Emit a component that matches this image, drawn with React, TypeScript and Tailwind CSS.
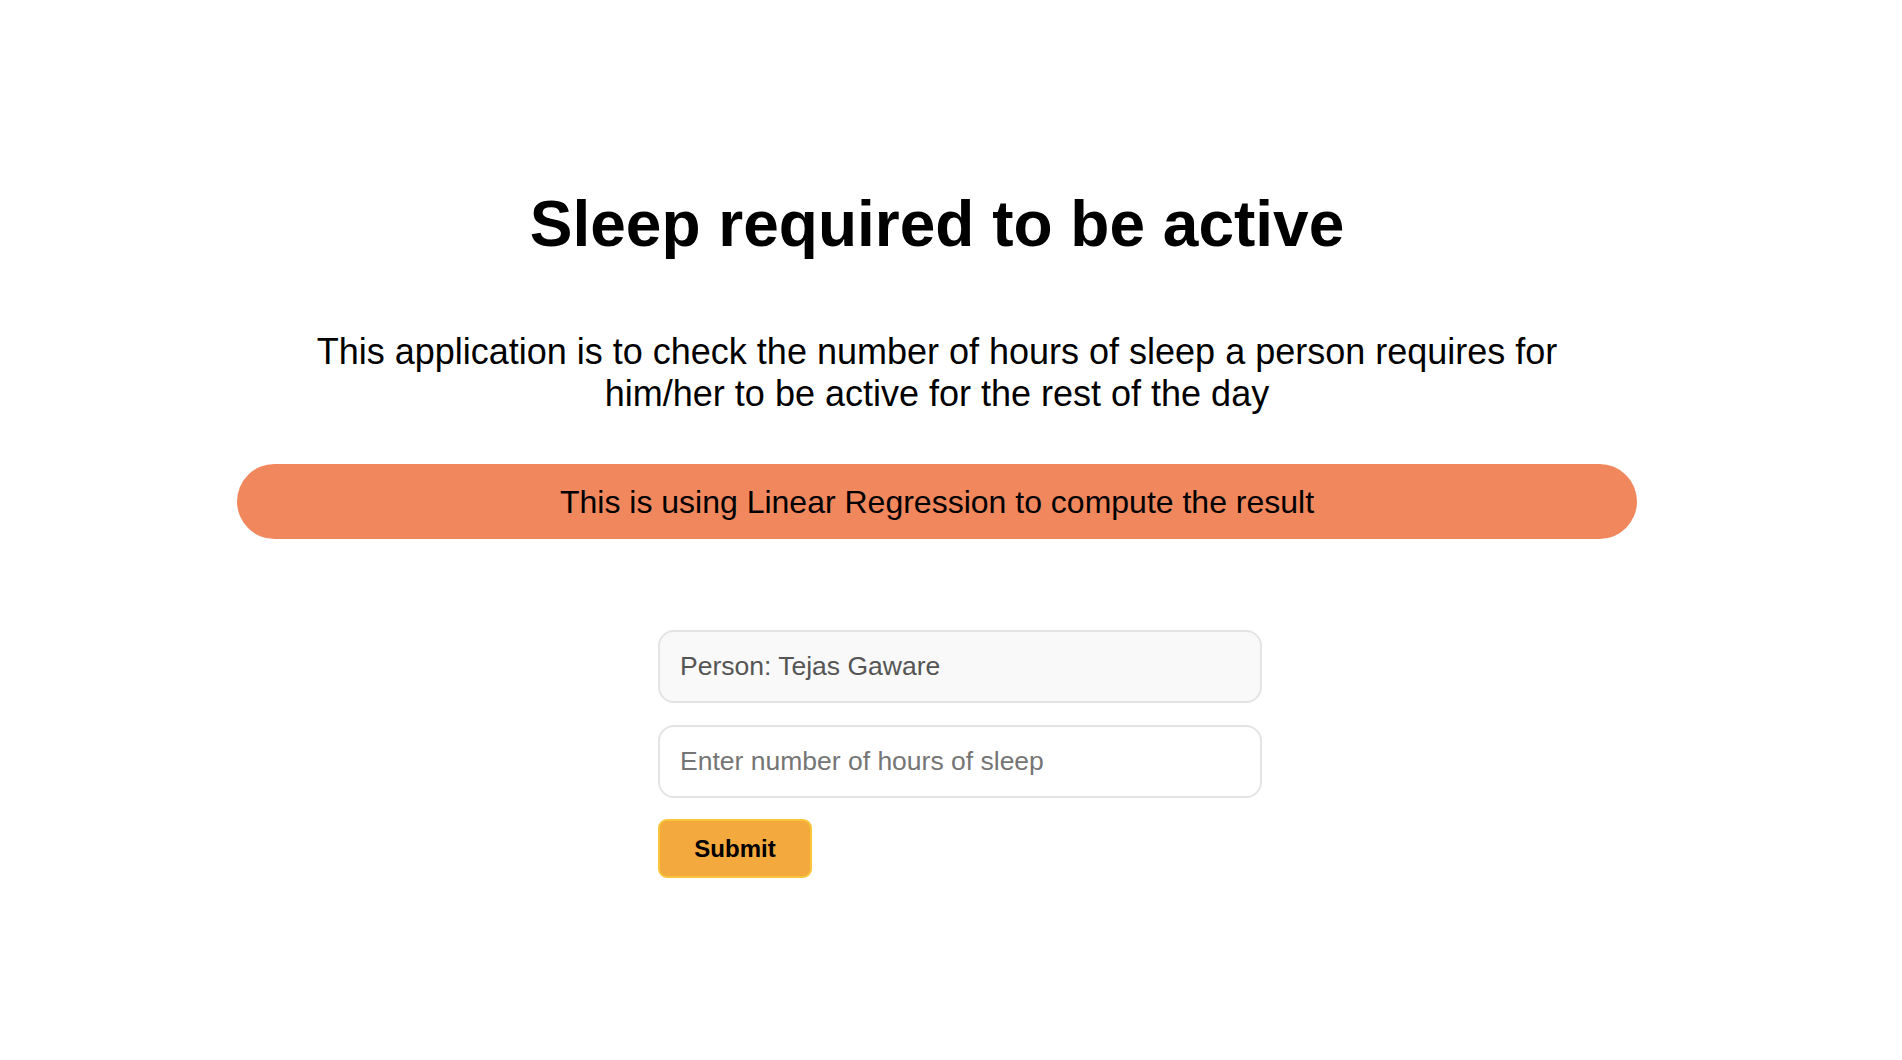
import { useState } from 'react';

const App = () => {
  const [hours, setHours] = useState<string>('');

  return (
    <div className="min-h-screen w-full bg-white font-['Liberation_Sans',Arial,sans-serif] text-black">
      <div className="w-[1874px] flex flex-col items-center pt-[187px]">
        <h1 className="text-[64px] leading-[74px] font-bold">Sleep required to be active</h1>
        <p className="w-[1300px] mt-[70px] text-center text-[36px] leading-[42px]">
          This application is to check the number of hours of sleep a person requires for him/her to be active for
          the rest of the day
        </p>
        <div className="w-[1400px] h-[75px] mt-[49px] rounded-full bg-[#f0875d] flex items-center justify-center text-[32px]">
          This is using Linear Regression to compute the result
        </div>

        <form
          className="self-start ml-[658px] mt-[91px] flex flex-col items-start"
          onSubmit={(e) => e.preventDefault()}
        >
          <input
            type="text"
            readOnly
            value="Person: Tejas Gaware"
            className="w-[604px] h-[73px] px-[20px] rounded-[16px] border-2 border-[#e4e4e4] bg-[#f9f9f9] text-[26.5px] text-[#555555] outline-none"
          />
          <input
            type="text"
            value={hours}
            onChange={(e) => setHours(e.target.value)}
            placeholder="Enter number of hours of sleep"
            className="w-[604px] h-[73px] mt-[22px] px-[20px] rounded-[16px] border-2 border-[#e4e4e4] bg-white text-[26.5px] text-[#555555] placeholder:text-[#757575] outline-none"
          />
          <button
            type="submit"
            className="w-[154px] h-[59px] mt-[21px] rounded-[9px] border-2 border-[#f9c63b] bg-[#f3a93d] text-[24px] font-bold text-black"
          >
            Submit
          </button>
        </form>
      </div>
    </div>
  );
};

export default App;
